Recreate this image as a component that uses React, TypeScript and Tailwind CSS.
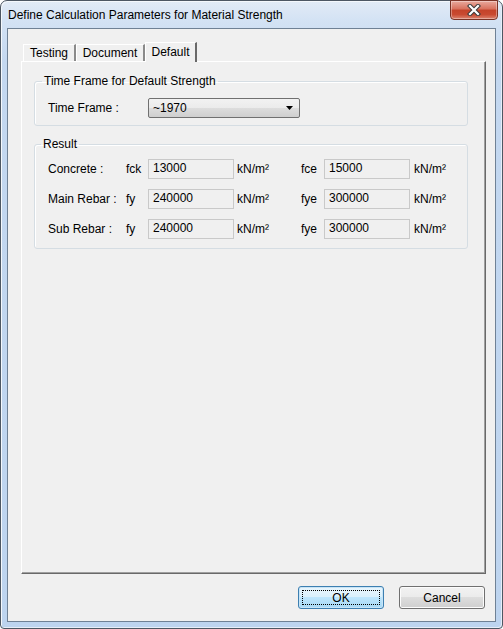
import React from "react"

const font = { fontFamily: '"Liberation Sans", Arial, sans-serif' }

type Row = {
  label: string
  sym1: string
  val1: string
  sym2: string
  val2: string
}

const rows: Row[] = [
  { label: "Concrete :", sym1: "fck", val1: "13000", sym2: "fce", val2: "15000" },
  { label: "Main Rebar :", sym1: "fy", val1: "240000", sym2: "fye", val2: "300000" },
  { label: "Sub Rebar :", sym1: "fy", val1: "240000", sym2: "fye", val2: "300000" },
]

function ReadOnlyBox({ value }: { value: string }) {
  return (
    <div className="h-[20px] border border-[#c9c9c9] bg-[#f0f0f0] pl-[4px] text-[12px] leading-[16px] text-black">
      {value}
    </div>
  )
}

function Unit({ pad }: { pad: string }) {
  return <div className={`${pad} text-[12px] leading-[16px] text-black`}>kN/m²</div>
}

function Tab({ label, active, width }: { label: string; active?: boolean; width: string }) {
  if (active) {
    return (
      <div
        className={`relative z-10 h-[20px] ${width} border-l border-t border-white border-r-2 border-r-[#696969] bg-[#f0f0f0] text-center text-[12px] leading-[18px] text-black`}
      >
        {label}
      </div>
    )
  }
  return (
    <div
      className={`mt-[2px] h-[17px] ${width} border-l border-t border-white border-r-2 border-r-[#8a8a8a] bg-[#f0f0f0] text-center text-[12px] leading-[17px] text-black`}
    >
      {label}
    </div>
  )
}

export default function App() {
  return (
    <div className="w-[503px] h-[629px] bg-white" style={font}>
      {/* window frame */}
      <div className="flex h-full w-full flex-col rounded-t-[7px] rounded-b-[4px] border border-[#4d5763] bg-[linear-gradient(to_bottom,#e2ebf6_0px,#d3e2f4_20px,#c4d8f0_60px,#bdd4ef_100%)] shadow-[inset_1px_1px_0_#f4f8fc,inset_-1px_-1px_0_#e6eef8]">
        {/* title bar */}
        <div className="flex h-[27px] items-start justify-between">
          <div className="pl-[7px] pt-[7px] text-[12px] leading-[15px] text-black">
            Define Calculation Parameters for Material Strength
          </div>
          <button className="mr-[4px] -mt-px flex h-[20px] w-[48px] items-center justify-center rounded-b-[4px] border border-[#7a3326] bg-[linear-gradient(to_bottom,#e9aa9e_0%,#d8705c_45%,#c4432a_50%,#c94a31_75%,#dc8470_100%)] shadow-[inset_0_0_0_1px_rgba(255,255,255,0.35)]">
            <svg width="14" height="12" viewBox="0 0 14 12">
              <path d="M3 2 L11 10 M11 2 L3 10" stroke="#3b3b3b" strokeWidth="4.2" strokeLinecap="square" />
              <path d="M3 2 L11 10 M11 2 L3 10" stroke="#ffffff" strokeWidth="2.2" strokeLinecap="square" />
            </svg>
          </button>
        </div>

        {/* client area */}
        <div className="mx-[6px] mb-[6px] flex flex-1 flex-col border border-[#6f8195] bg-[#f0f0f0] pl-[13px] pr-[9px] pt-[13px]">
          {/* tabs */}
          <div className="-mb-px flex h-[20px] items-start pl-[2px]">
            <Tab label="Testing" width="w-[53px]" />
            <Tab label="Document" width="w-[69px]" />
            <Tab label="Default" width="w-[52px]" active />
          </div>

          {/* tab panel */}
          <div className="flex-1 border border-l-white border-t-white border-r-[#696969] border-b-[#696969] shadow-[inset_-1px_-1px_0_#a0a0a0] pl-[12px] pr-[17px] pt-[11px]">
            <fieldset className="rounded-[3px] border border-[#d5dde3] px-[13px] pb-[7px] pt-[9px] shadow-[inset_1px_1px_0_#ffffff]">
              <legend className="-ml-[6px] px-[2px] text-[12px] leading-[16px] text-black">
                Time Frame for Default Strength
              </legend>
              <div className="flex items-center">
                <span className="w-[100px] text-[12px] leading-[16px] text-black">Time Frame :</span>
                <div className="flex h-[20px] w-[152px] items-center justify-between rounded-[2px] border border-[#707070] bg-[linear-gradient(to_bottom,#f2f2f2_0%,#ebebeb_50%,#dddddd_50%,#cfcfcf_100%)] pl-[4px] pr-[5px]">
                  <span className="text-[12px] leading-[16px] text-black">~1970</span>
                  <svg width="8" height="5" viewBox="0 0 8 5">
                    <path d="M0 0 H7 L3.5 4 Z" fill="#000000" />
                  </svg>
                </div>
              </div>
            </fieldset>

            <fieldset className="mt-[10px] rounded-[3px] border border-[#d5dde3] pl-[13px] pb-[9px] pt-[7px] shadow-[inset_1px_1px_0_#ffffff]">
              <legend className="-ml-[7px] px-[2px] text-[12px] leading-[16px] text-black">Result</legend>
              <div className="grid grid-cols-[78px_22px_86px_67px_23px_86px_1fr] items-center gap-y-[10px] text-[12px] leading-[16px]">
                {rows.map((row) => (
                  <React.Fragment key={row.label}>
                    <span className="text-black">{row.label}</span>
                    <span className="text-black">{row.sym1}</span>
                    <ReadOnlyBox value={row.val1} />
                    <Unit pad="pl-[3px]" />
                    <span className="text-black">{row.sym2}</span>
                    <ReadOnlyBox value={row.val2} />
                    <Unit pad="pl-[4px]" />
                  </React.Fragment>
                ))}
              </div>
            </fieldset>
          </div>

          {/* buttons */}
          <div className="flex justify-end gap-[15px] pb-[12px] pr-[1px] pt-[12px]">
            <button className="relative h-[23px] w-[86px] rounded-[3px] border border-[#3c7fb1] bg-[linear-gradient(to_bottom,#eaf6fd_0%,#d9f0fc_50%,#bee6fd_50%,#a7d9f5_100%)] text-[12px] text-black shadow-[inset_0_0_0_1px_#c8e4f6]">
              <span className="absolute inset-[3px] border border-dotted border-black" />
              OK
            </button>
            <button className="h-[23px] w-[86px] rounded-[3px] border border-[#707070] bg-[linear-gradient(to_bottom,#f2f2f2_0%,#ebebeb_50%,#dddddd_50%,#cfcfcf_100%)] text-[12px] text-black shadow-[inset_0_0_0_1px_#fcfcfc]">
              Cancel
            </button>
          </div>
        </div>
      </div>
    </div>
  )
}
